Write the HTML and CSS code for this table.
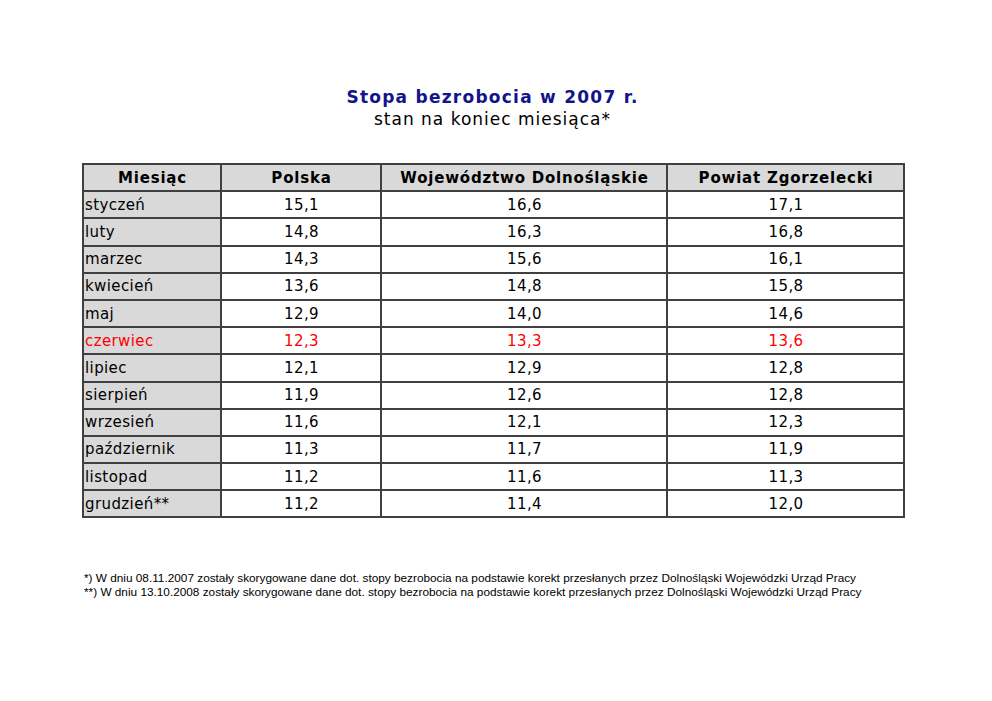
FILE: index.html
```html
<!DOCTYPE html>
<html lang="pl">
<head>
<meta charset="utf-8">
<title>Stopa bezrobocia w 2007 r.</title>
<link rel="stylesheet" href="styles.css">
</head>
<body>
<div class="page">
  <div class="heading">
    <div class="title">Stopa bezrobocia w 2007 r.</div>
    <div class="subtitle">stan na koniec miesiąca*</div>
  </div>
  <table class="data">
    <colgroup>
      <col class="c1"><col class="c2"><col class="c3"><col class="c4">
    </colgroup>
    <thead>
      <tr><th>Miesiąc</th><th>Polska</th><th>Województwo Dolnośląskie</th><th>Powiat Zgorzelecki</th></tr>
    </thead>
    <tbody>
      <tr><td class="m">styczeń</td><td>15,1</td><td>16,6</td><td>17,1</td></tr>
      <tr><td class="m">luty</td><td>14,8</td><td>16,3</td><td>16,8</td></tr>
      <tr><td class="m">marzec</td><td>14,3</td><td>15,6</td><td>16,1</td></tr>
      <tr><td class="m">kwiecień</td><td>13,6</td><td>14,8</td><td>15,8</td></tr>
      <tr><td class="m">maj</td><td>12,9</td><td>14,0</td><td>14,6</td></tr>
      <tr class="hl"><td class="m">czerwiec</td><td>12,3</td><td>13,3</td><td>13,6</td></tr>
      <tr><td class="m">lipiec</td><td>12,1</td><td>12,9</td><td>12,8</td></tr>
      <tr><td class="m">sierpień</td><td>11,9</td><td>12,6</td><td>12,8</td></tr>
      <tr><td class="m">wrzesień</td><td>11,6</td><td>12,1</td><td>12,3</td></tr>
      <tr><td class="m">październik</td><td>11,3</td><td>11,7</td><td>11,9</td></tr>
      <tr><td class="m">listopad</td><td>11,2</td><td>11,6</td><td>11,3</td></tr>
      <tr><td class="m">grudzień**</td><td>11,2</td><td>11,4</td><td>12,0</td></tr>
    </tbody>
  </table>
  <div class="notes">
    <div>*) W dniu 08.11.2007 zostały skorygowane dane dot. stopy bezrobocia na podstawie korekt przesłanych przez Dolnośląski Wojewódzki Urząd Pracy</div>
    <div>**) W dniu 13.10.2008 zostały skorygowane dane dot. stopy bezrobocia na podstawie korekt przesłanych przez Dolnośląski Wojewódzki Urząd Pracy</div>
  </div>
</div>
</body>
</html>
```

FILE: styles.css
```css
html, body {
  margin: 0;
  padding: 0;
  background: #ffffff;
}

.page {
  width: 821px;
  margin-left: 82px;
  padding-top: 86px;
  font-family: "DejaVu Sans", Verdana, sans-serif;
  color: #000;
}

.heading {
  text-align: center;
  font-size: 17px;
  line-height: 22px;
  margin-left: -70px;
  margin-right: -70px;
}

.title {
  font-weight: bold;
  color: #14148a;
  letter-spacing: 1.25px;
}

.subtitle {
  color: #000;
  letter-spacing: 1px;
}

.data {
  margin-top: 33px;
  width: 821px;
  border-collapse: collapse;
  table-layout: fixed;
  font-size: 15px;
  letter-spacing: 0.4px;
  border: 2px solid #404040;
}

.c1 { width: 138px; }
.c2 { width: 160px; }
.c3 { width: 286px; }
.c4 { width: 237px; }

.data th,
.data td {
  border: 2px solid #404040;
  height: 23.2px;
  padding: 1px 0 1px 1px;
  text-align: center;
  background: #ffffff;
  white-space: nowrap;
}

.data th {
  background: #d9d9d9;
  font-weight: bold;
  letter-spacing: 0.8px;
}

.data td.m {
  text-align: left;
  background: #d9d9d9;
}

.data tr.hl td {
  color: #ff0000;
}

.notes {
  margin-top: 53px;
  margin-left: 2px;
  font-family: "Liberation Sans", Arial, sans-serif;
  font-size: 11.8px;
  line-height: 14px;
  width: 900px;
}
```
